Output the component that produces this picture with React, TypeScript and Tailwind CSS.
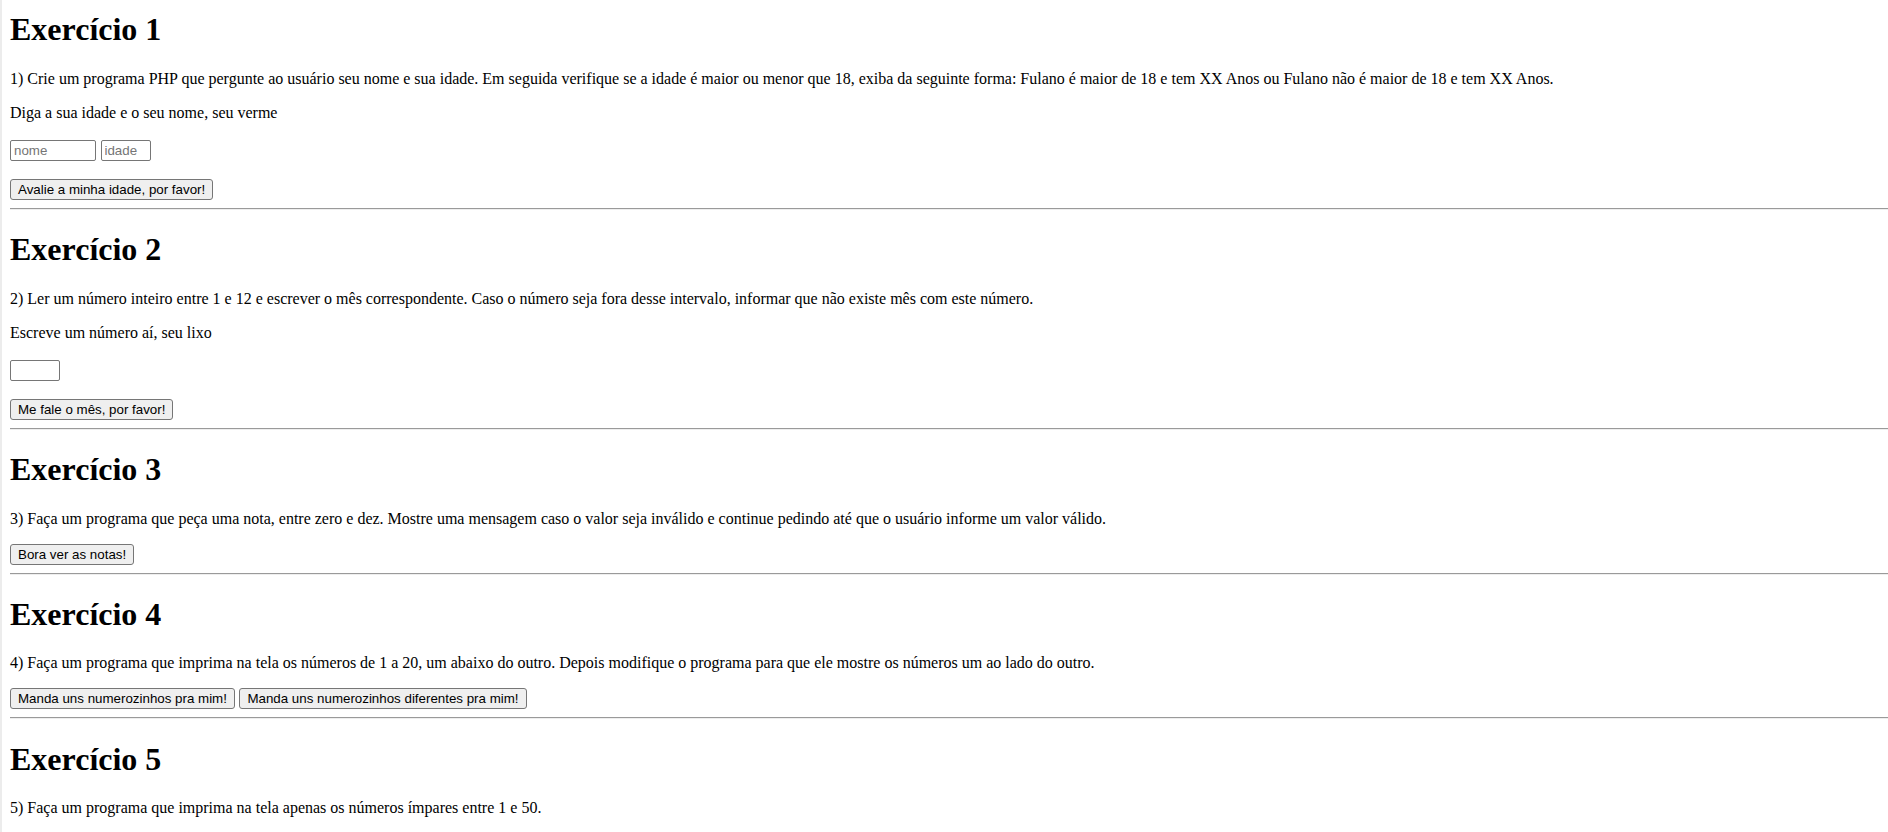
import React from "react";

const serif = { fontFamily: '"Liberation Serif", "Times New Roman", serif' };

function H({ children, first }: { children: React.ReactNode; first?: boolean }) {
  return (
    <h1
      className={`text-[32px] font-bold leading-[normal] text-black ${first ? "mt-[11.4px]" : "mt-[21.44px]"}`}
    >
      {children}
    </h1>
  );
}

function P({ children, mt }: { children: React.ReactNode; mt: "big" | "norm" }) {
  return (
    <p className={`text-[16px] leading-[normal] text-black ${mt === "big" ? "mt-[21.44px]" : "mt-4"}`}>
      {children}
    </p>
  );
}

function Btn({ children }: { children: React.ReactNode }) {
  return (
    <button
      className="h-[21px] px-[7px] border border-[#767676] rounded-[3px] bg-[#efefef] text-black text-[13.333px] leading-[normal] whitespace-nowrap"
      style={{ fontFamily: '"Liberation Sans", Arial, sans-serif' }}
    >
      {children}
    </button>
  );
}

function Inp({ w, ph }: { w: string; ph?: string }) {
  return (
    <input
      placeholder={ph}
      className={`${w} h-[21px] px-[3px] border border-[#767676] rounded-[2px] bg-white text-[13.333px] leading-[normal] placeholder:text-[#757575]`}
      style={{ fontFamily: '"Liberation Sans", Arial, sans-serif' }}
    />
  );
}

function Hr() {
  return <div className="mt-2 h-[2px] border-t border-t-[#9a9a9a] border-b border-b-[#eeeeee]" />;
}

export default function App() {
  return (
    <div className="flex min-h-screen bg-white" style={serif}>
      <div className="w-[2px] shrink-0 bg-[#ececec]" />
      <div className="flex-1 flex flex-col pl-2">
        <H first>Exercício 1</H>
        <P mt="big">
          1) Crie um programa PHP que pergunte ao usuário seu nome e sua idade. Em seguida verifique se a idade é maior ou menor que 18, exiba da seguinte forma: Fulano é maior de 18 e tem XX Anos ou Fulano não é maior de 18 e tem XX Anos.
        </P>
        <P mt="norm">Diga a sua idade e o seu nome, seu verme</P>
        <div className="mt-[18px] flex gap-[4.5px]">
          <Inp w="w-[86px]" ph="nome" />
          <Inp w="w-[50px]" ph="idade" />
        </div>
        <div className="mt-[18px] flex">
          <Btn>Avalie a minha idade, por favor!</Btn>
        </div>
        <Hr />

        <H>Exercício 2</H>
        <P mt="big">
          2) Ler um número inteiro entre 1 e 12 e escrever o mês correspondente. Caso o número seja fora desse intervalo, informar que não existe mês com este número.
        </P>
        <P mt="norm">Escreve um número aí, seu lixo</P>
        <div className="mt-[18px] flex">
          <Inp w="w-[50px]" />
        </div>
        <div className="mt-[18px] flex">
          <Btn>Me fale o mês, por favor!</Btn>
        </div>
        <Hr />

        <H>Exercício 3</H>
        <P mt="big">
          3) Faça um programa que peça uma nota, entre zero e dez. Mostre uma mensagem caso o valor seja inválido e continue pedindo até que o usuário informe um valor válido.
        </P>
        <div className="mt-4 flex">
          <Btn>Bora ver as notas!</Btn>
        </div>
        <Hr />

        <H>Exercício 4</H>
        <P mt="big">
          4) Faça um programa que imprima na tela os números de 1 a 20, um abaixo do outro. Depois modifique o programa para que ele mostre os números um ao lado do outro.
        </P>
        <div className="mt-4 flex gap-[4.5px]">
          <Btn>Manda uns numerozinhos pra mim!</Btn>
          <Btn>Manda uns numerozinhos diferentes pra mim!</Btn>
        </div>
        <Hr />

        <H>Exercício 5</H>
        <P mt="big">5) Faça um programa que imprima na tela apenas os números ímpares entre 1 e 50.</P>
        <div className="h-6" />
      </div>
    </div>
  );
}
